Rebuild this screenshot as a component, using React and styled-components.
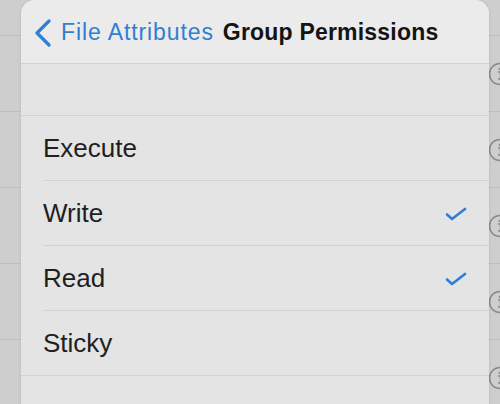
import React from 'react';
import styled, { createGlobalStyle } from 'styled-components';

const GlobalStyle = createGlobalStyle`
  html, body {
    margin: 0;
    padding: 0;
    background: #cecece;
  }
  body {
    font-family: "Liberation Sans", Arial, Helvetica, sans-serif;
  }
`;

const Screen = styled.div`
  position: relative;
  width: 500px;
  height: 404px;
  overflow: hidden;
  background: #cecece;
`;

// dimmed table behind the popover
const Backdrop = styled.div`
  display: flex;
  flex-direction: column;
`;

const BackRow = styled.div`
  position: relative;
  height: ${({ h }) => h}px;
  border-bottom: 1px solid #bfbfbf;
  flex-shrink: 0;
`;

const InfoIcon = styled.svg`
  position: absolute;
  right: -12px;
  top: 50%;
  width: 24px;
  height: 24px;
  margin-top: -12px;
`;

const Popover = styled.div`
  position: absolute;
  left: 21px;
  top: 0;
  width: 468px;
  height: 420px;
  background: #e4e4e4;
  border-radius: 14px 14px 0 0;
  box-shadow: 0 0 3px rgba(0, 0, 0, 0.12);
  display: flex;
  flex-direction: column;
  overflow: hidden;
`;

const Header = styled.div`
  height: 64px;
  flex-shrink: 0;
  display: flex;
  align-items: center;
  background: #ebebeb;
  border-bottom: 1px solid #d2d2d2;
  padding-left: 13px;
  padding-top: 2px;
  box-sizing: border-box;
`;

const BackButton = styled.div`
  display: flex;
  align-items: center;
  color: #2f7fd2;
  font-size: 23px;
  letter-spacing: 0.9px;
`;

const Chevron = styled.svg`
  width: 18px;
  height: 28px;
  margin-right: 9px;
`;

const Title = styled.div`
  margin-left: 9px;
  font-size: 23px;
  font-weight: bold;
  color: #141414;
  letter-spacing: 0.2px;
`;

const Spacer = styled.div`
  height: 51px;
  flex-shrink: 0;
  border-bottom: 1px solid #d2d2d2;
`;

const List = styled.div`
  display: flex;
  flex-direction: column;
`;

const Row = styled.div`
  height: 65px;
  flex-shrink: 0;
  box-sizing: border-box;
  display: flex;
  align-items: center;
  justify-content: space-between;
  padding: 0 22px 0 22px;
  position: relative;

  &::after {
    content: '';
    position: absolute;
    left: ${({ last }) => (last ? '0' : '22px')};
    right: 0;
    bottom: 0;
    height: 1px;
    background: #d2d2d2;
  }
`;

const Label = styled.span`
  font-size: 26px;
  color: #1f1f1f;
`;

const Check = styled.svg`
  width: 22px;
  height: 14px;
`;

const rows = [
  { label: 'Execute', checked: false },
  { label: 'Write', checked: true },
  { label: 'Read', checked: true },
  { label: 'Sticky', checked: false },
];

const backRows = [35, 75, 75, 75, 75, 75];

export default function App() {
  return (
    <>
      <GlobalStyle />
      <Screen>
        <Backdrop>
          {backRows.map((h, i) => (
            <BackRow key={i} h={h}>
              {i > 0 && (
                <InfoIcon viewBox="0 0 24 24">
                  <circle cx="12" cy="12" r="10.5" fill="none" stroke="#8a8a8a" strokeWidth="1.5" />
                  <circle cx="12" cy="7" r="1.3" fill="#8a8a8a" />
                  <path d="M10 10 H12.5 V17 M10 17 H15" fill="none" stroke="#8a8a8a" strokeWidth="1.4" />
                </InfoIcon>
              )}
            </BackRow>
          ))}
        </Backdrop>
        <Popover>
          <Header>
            <BackButton>
              <Chevron viewBox="0 0 18 28">
                <path
                  d="M15 2 L3 14 L15 26"
                  fill="none"
                  stroke="#2f7fd2"
                  strokeWidth="3.2"
                  strokeLinecap="round"
                  strokeLinejoin="round"
                />
              </Chevron>
              File Attributes
            </BackButton>
            <Title>Group Permissions</Title>
          </Header>
          <Spacer />
          <List>
            {rows.map((r, i) => (
              <Row key={r.label} last={i === rows.length - 1}>
                <Label>{r.label}</Label>
                {r.checked && (
                  <Check viewBox="0 0 22 14">
                    <path
                      d="M2 7.5 L7 12 L20 2"
                      fill="none"
                      stroke="#2f7fd2"
                      strokeWidth="2.6"
                      strokeLinecap="round"
                      strokeLinejoin="round"
                    />
                  </Check>
                )}
              </Row>
            ))}
          </List>
        </Popover>
      </Screen>
    </>
  );
}
